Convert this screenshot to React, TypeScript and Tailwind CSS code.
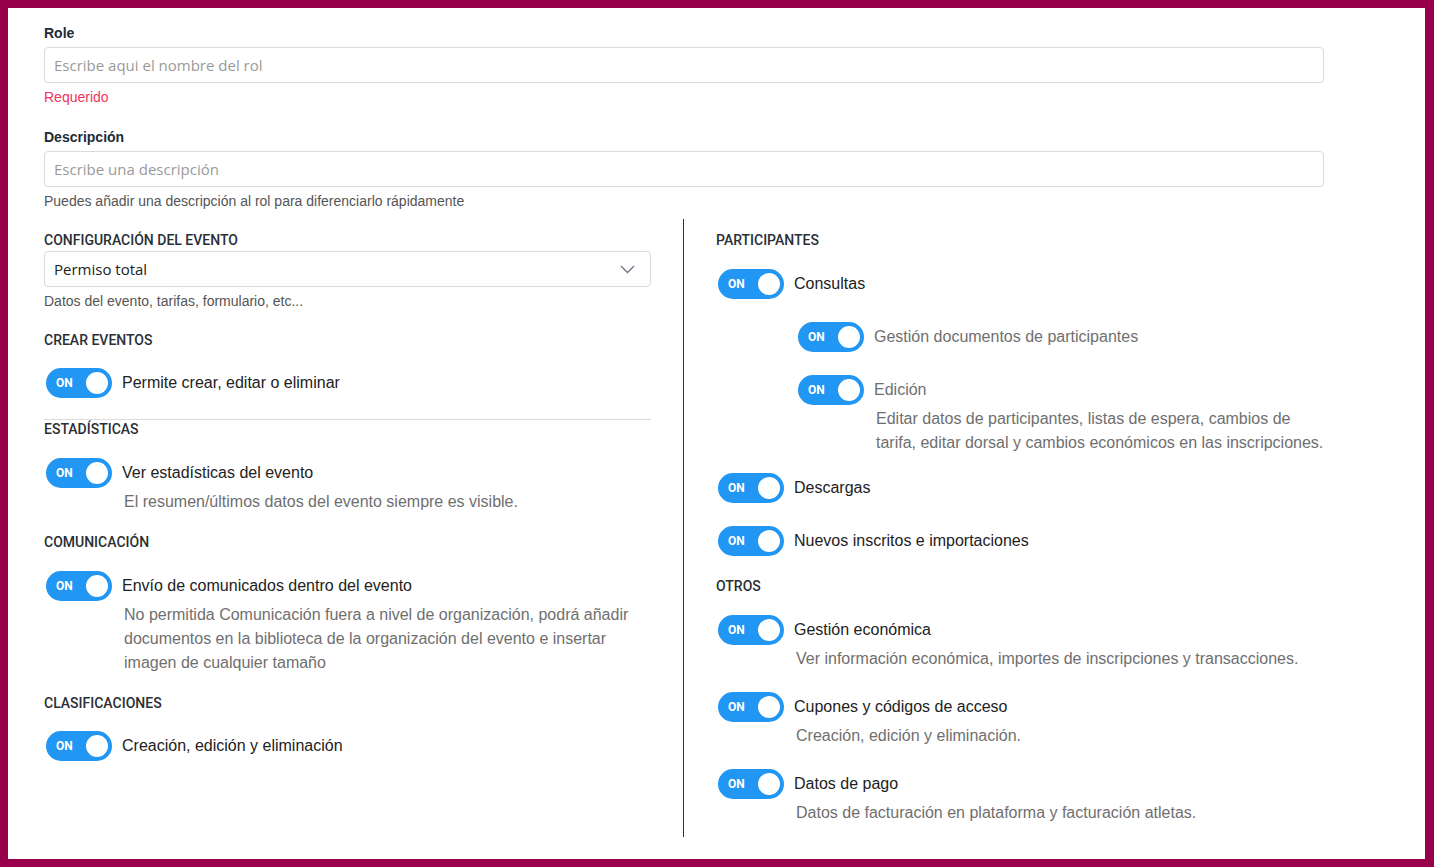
import type { ReactNode } from "react";

const sans = { fontFamily: '"Liberation Sans", Arial, sans-serif' };

function Toggle() {
  return (
    <div className="relative flex h-[30px] w-[66px] shrink-0 items-center rounded-full bg-[#2196f3]">
      <span className="ml-[10px] text-[12px] font-bold text-white" style={{ fontFamily: "Roboto, sans-serif" }}>
        ON
      </span>
      <span className="absolute right-[4px] top-[4px] h-[22px] w-[22px] rounded-full bg-white" />
    </div>
  );
}

function Heading({ children, className = "" }: { children: ReactNode; className?: string }) {
  return (
    <div
      className={`h-[18px] text-[14px] font-medium leading-[18px] text-[#2a2f36] ${className}`}
      style={{ fontFamily: "Roboto, sans-serif" }}
    >
      {children}
    </div>
  );
}

function Row({
  label,
  muted = false,
  desc,
  nested = false,
  className = "",
}: {
  label: string;
  muted?: boolean;
  desc?: ReactNode;
  nested?: boolean;
  className?: string;
}) {
  return (
    <div className={`${nested ? "pl-[80px]" : ""} ${className}`}>
      <div className="flex items-center pl-[2px]">
        <Toggle />
        <span className={`ml-[10px] text-[16px] leading-[24px] ${muted ? "text-[#6f6f6f]" : "text-[#222]"}`}>{label}</span>
      </div>
      {desc && <p className="mt-[2px] pl-[80px] text-[16px] leading-[24px] text-[#6f6f6f]">{desc}</p>}
    </div>
  );
}

export default function App() {
  return (
    <div className="min-h-[867px] bg-[#99004b] pb-[8px] pl-[8px] pr-[9px] pt-[8px]" style={sans}>
      <div className="h-[851px] bg-white pl-[36px] pt-[15px]">
        <div className="w-[1280px]">
          <label className="block text-[14px] font-bold leading-[20px] text-[#212b36]">Role</label>
          <div
            className="mt-[4px] flex h-[36px] items-center rounded-[4px] border border-[#dadada] px-[9px] text-[15px] text-[#9a9a9a]"
            style={{ fontFamily: '"Open Sans", sans-serif' }}
          >
            Escribe aqui el nombre del rol
          </div>
          <div className="mt-[4px] text-[14px] leading-[20px] text-[#f2335a]">Requerido</div>

          <label className="mt-[20px] block text-[14px] font-bold leading-[20px] text-[#212b36]">Descripción</label>
          <div
            className="mt-[4px] flex h-[36px] items-center rounded-[4px] border border-[#dadada] px-[9px] text-[15px] text-[#9a9a9a]"
            style={{ fontFamily: '"Open Sans", sans-serif' }}
          >
            Escribe una descripción
          </div>
          <div className="mt-[5px] text-[14px] leading-[18px] text-[#555]">
            Puedes añadir una descripción al rol para diferenciarlo rápidamente
          </div>

          <div className="mt-[9px] flex">
            {/* left column */}
            <div className="w-[607px] pt-[12px]">
              <Heading>CONFIGURACIÓN DEL EVENTO</Heading>
              <div
                className="mt-[2px] flex h-[36px] items-center justify-between rounded-[4px] border border-[#dadada] pl-[9px] pr-[15px] text-[15px] text-[#222]"
                style={{ fontFamily: '"Open Sans", sans-serif' }}
              >
                <span>Permiso total</span>
                <svg width="15" height="9" viewBox="0 0 15 9" fill="none">
                  <polyline points="1,1 7.5,7.5 14,1" stroke="#6b7280" strokeWidth="1.3" />
                </svg>
              </div>
              <div className="mt-[5px] text-[14px] leading-[18px] text-[#555]">Datos del evento, tarifas, formulario, etc...</div>

              <Heading className="mt-[21px]">CREAR EVENTOS</Heading>
              <Row className="mt-[19px]" label="Permite crear, editar o eliminar" />
              <div className="mt-[21px] border-t border-[#dcdcdc]" />

              <Heading>ESTADÍSTICAS</Heading>
              <Row className="mt-[20px]" label="Ver estadísticas del evento" desc="El resumen/últimos datos del evento siempre es visible." />

              <Heading className="mt-[19px]">COMUNICACIÓN</Heading>
              <Row
                className="mt-[20px]"
                label="Envío de comunicados dentro del evento"
                desc={
                  <>
                    No permitida Comunicación fuera a nivel de organización, podrá añadir
                    <br />
                    documentos en la biblioteca de la organización del evento e insertar
                    <br />
                    imagen de cualquier tamaño
                  </>
                }
              />

              <Heading className="mt-[19px]">CLASIFICACIONES</Heading>
              <Row className="mt-[19px]" label="Creación, edición y eliminación" />
            </div>

            <div className="mx-[32px] w-px bg-[#333]" />

            {/* right column */}
            <div className="flex-1 pb-[12px] pt-[12px]">
              <Heading>PARTICIPANTES</Heading>
              <Row className="mt-[20px]" label="Consultas" />
              <Row className="mt-[23px]" nested muted label="Gestión documentos de participantes" />
              <Row
                className="mt-[23px]"
                nested
                muted
                label="Edición"
                desc={
                  <>
                    Editar datos de participantes, listas de espera, cambios de
                    <br />
                    tarifa, editar dorsal y cambios económicos en las inscripciones.
                  </>
                }
              />
              <Row className="mt-[18px]" label="Descargas" />
              <Row className="mt-[23px]" label="Nuevos inscritos e importaciones" />

              <Heading className="mt-[21px]">OTROS</Heading>
              <Row
                className="mt-[20px]"
                label="Gestión económica"
                desc="Ver información económica, importes de inscripciones y transacciones."
              />
              <Row className="mt-[21px]" label="Cupones y códigos de acceso" desc="Creación, edición y eliminación." />
              <Row
                className="mt-[21px]"
                label="Datos de pago"
                desc="Datos de facturación en plataforma y facturación atletas."
              />
            </div>
          </div>
        </div>
      </div>
    </div>
  );
}
